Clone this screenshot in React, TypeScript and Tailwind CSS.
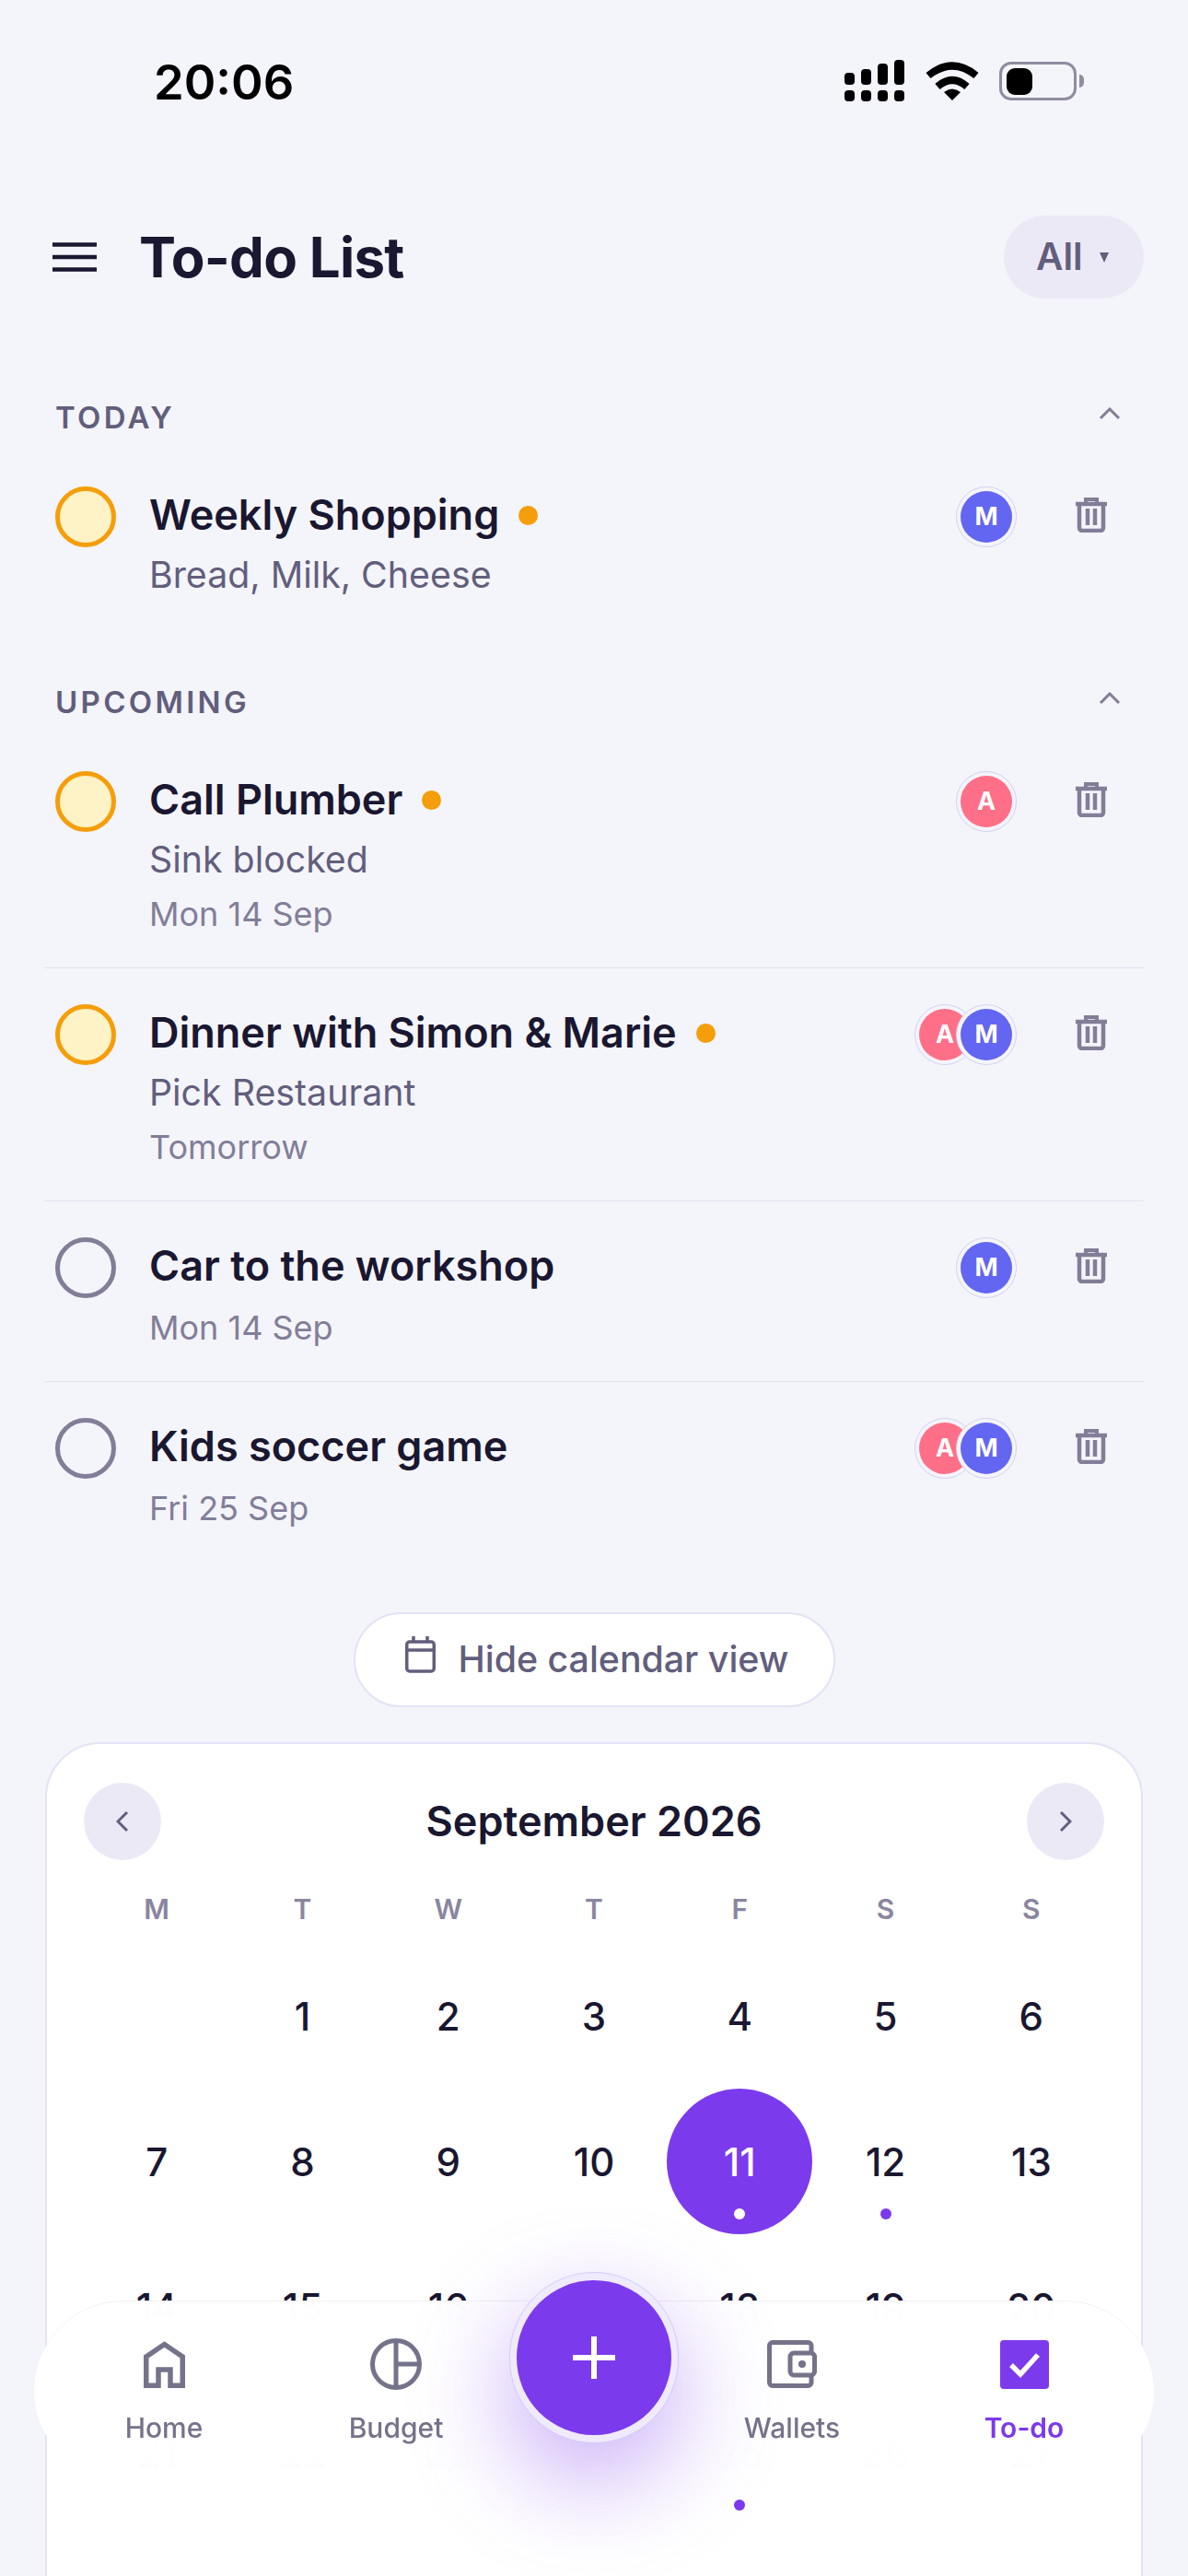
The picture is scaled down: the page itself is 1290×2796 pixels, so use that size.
const days: (number | null)[] = [
  null, 1, 2, 3, 4, 5, 6,
  7, 8, 9, 10, 11, 12, 13,
  14, 15, 16, 17, 18, 19, 20,
  21, 22, 23, 24, 25, 26, 27,
  28, 29, 30,
];
const dotted = [11, 12, 14, 25];
const weekdays = ["M", "T", "W", "T", "F", "S", "S"];

const Avatar = ({ letter, color }: { letter: string; color: string }) => (
  <div className="relative flex h-[66px] w-[66px] items-center justify-center rounded-full border border-[#d4d1f2] bg-[#f4f4fb]">
    <div className={`flex h-[56px] w-[56px] items-center justify-center rounded-full text-[27px] font-bold text-white ${color}`}>
      {letter}
    </div>
  </div>
);

const Trash = () => (
  <svg width="34" height="38" viewBox="0 0 34 38" fill="none" stroke="#827e98">
    <path d="M0 7H34" strokeWidth="4.5" />
    <path d="M11 5V2H23V5" strokeWidth="4" />
    <path d="M4 8V33a3 3 0 0 0 3 3H27a3 3 0 0 0 3-3V8" strokeWidth="4.5" />
    <path d="M13 12V30M21 12V30" strokeWidth="4.5" />
  </svg>
);

const Chevron = () => (
  <svg width="24" height="14" viewBox="0 0 24 14" fill="none" stroke="#827e98" strokeWidth="3" className="mb-[11px]">
    <path d="M2 12L12 2L22 12" />
  </svg>
);

type Task = {
  title: string;
  sub?: string;
  date?: string;
  flagged?: boolean;
  people: string[];
};

const Row = ({ task, last }: { task: Task; last?: boolean }) => (
  <div className={`flex pl-[12px] pr-[40px] pt-[39px] pb-[35px] ${last ? "" : "border-b border-[#e4e2f3]"}`}>
    <div
      className={`h-[66px] w-[66px] shrink-0 rounded-full border-[5px] ${
        task.flagged ? "border-[#f59e0b] bg-[#fef3c7]" : "border-[#827e98]"
      }`}
    />
    <div className="ml-[36px] flex-1">
      <div className="flex h-[62px] items-center">
        <span className="text-[45px] font-semibold text-[#1a1730]">{task.title}</span>
        {task.flagged && <span className="ml-[21px] h-[21px] w-[21px] rounded-full bg-[#f59e0b]" />}
      </div>
      {task.sub && <div className="mt-[8px] h-[52px] text-[39.3px] leading-[52px] text-[#625e7c]">{task.sub}</div>}
      {task.date && (
        <div className={`${task.sub ? "mt-[10px]" : "mt-[13px]"} h-[46px] text-[36px] leading-[46px] text-[#827e98]`}>
          {task.date}
        </div>
      )}
    </div>
    <div className="flex h-[66px] items-center">
      <div className="flex">
        {task.people.map((p, i) => (
          <div key={i} className={i > 0 ? "-ml-[21px]" : ""}>
            <Avatar letter={p} color={p === "A" ? "bg-[#ff6f87]" : "bg-[#6366f1]"} />
          </div>
        ))}
      </div>
      <div className="mb-[4px] ml-[64px]">
        <Trash />
      </div>
    </div>
  </div>
);

const SectionLabel = ({ text }: { text: string }) => (
  <div className="flex h-[40px] items-center justify-between pl-[12px] pr-[25px]">
    <span className="text-[33px] font-semibold tracking-[0.1em] text-[#625e7c]">{text}</span>
    <Chevron />
  </div>
);

const StatusIcons = () => (
  <div className="flex items-center">
    <svg width="66" height="46" viewBox="0 0 66 46" fill="#000">
      <rect x="0" y="14" width="11" height="13" rx="4" />
      <rect x="18" y="10" width="11" height="17" rx="4" />
      <rect x="36" y="4" width="11" height="23" rx="4" />
      <rect x="54" y="0" width="11" height="27" rx="4" />
      <rect x="0" y="33" width="11" height="12" rx="4" />
      <rect x="18" y="33" width="11" height="12" rx="4" />
      <rect x="36" y="33" width="11" height="12" rx="4" />
      <rect x="54" y="33" width="11" height="12" rx="4" />
    </svg>
    <svg width="58" height="42" viewBox="0 0 58 42" className="ml-[22px]" fill="none" stroke="#000" strokeWidth="8">
      <path d="M3 15Q29 -6 55 15" />
      <path d="M13 27Q29 13 45 27" />
      <path d="M20 33Q29 26 38 33L29 42Z" fill="#000" stroke="none" />
    </svg>
    <div className="ml-[22px] flex items-center">
      <div className="flex h-[42px] w-[84px] items-center rounded-[13px] border-[3px] border-[#8f8ca0] pl-[5px]">
        <div className="h-[29px] w-[28px] rounded-[9px] bg-black" />
      </div>
      <div className="ml-[3px] h-[14px] w-[5px] rounded-r-full bg-[#8f8ca0]" />
    </div>
  </div>
);

const NavItem = ({ label, active, children }: { label: string; active?: boolean; children: React.ReactNode }) => (
  <div className="flex flex-col items-center">
    <div className="flex h-[60px] items-center">{children}</div>
    <span className={`mt-[19px] text-[30px] leading-[40px] ${active ? "font-semibold text-[#7c3aed]" : "font-medium text-[#75738a]"}`}>
      {label}
    </span>
  </div>
);

export default function App() {
  return (
    <div className="relative h-[2796px] w-[1290px] overflow-hidden bg-[#f4f4fb] font-['Inter',sans-serif]">
      <div className="flex h-[176px] items-center justify-between pl-[167px] pr-[113px]">
        <span className="mt-[2px] text-[52.5px] font-semibold text-black">20:06</span>
        <StatusIcons />
      </div>

      <div className="flex h-[206px] items-center pl-[57px] pr-[48px]">
        <svg width="48" height="32" viewBox="0 0 48 32" stroke="#1a1730" strokeWidth="4.5">
          <path d="M0 2.5H48M0 16H48M0 29.5H48" />
        </svg>
        <h1 className="ml-[46px] flex-1 text-[60px] font-bold tracking-[-0.012em] text-[#1a1730]">To-do List</h1>
        <div className="flex h-[90px] w-[152px] items-center rounded-full bg-[#ece9f7] pl-[35px]">
          <span className="text-[40.5px] font-semibold text-[#625e7c]">All</span>
          <svg width="10" height="11" viewBox="0 0 10 11" fill="#625e7c" className="ml-[18px]">
            <path d="M0 0H10L5 11Z" />
          </svg>
        </div>
      </div>

      <div className="mx-[48px] mt-[52px]">
        <SectionLabel text="TODAY" />
        <div className="mt-[15px]">
          <Row task={{ title: "Weekly Shopping", sub: "Bread, Milk, Cheese", flagged: true, people: ["M"] }} last />
        </div>
        <div className="mt-[58px]">
          <SectionLabel text="UPCOMING" />
        </div>
        <div className="mt-[15px]">
          <Row task={{ title: "Call Plumber", sub: "Sink blocked", date: "Mon 14 Sep", flagged: true, people: ["A"] }} />
          <Row task={{ title: "Dinner with Simon & Marie", sub: "Pick Restaurant", date: "Tomorrow", flagged: true, people: ["A", "M"] }} />
          <Row task={{ title: "Car to the workshop", date: "Mon 14 Sep", people: ["M"] }} />
          <Row task={{ title: "Kids soccer game", date: "Fri 25 Sep", people: ["A", "M"] }} last />
        </div>
      </div>

      <div className="mt-[55px] flex justify-center">
        <div className="flex h-[103px] w-[523px] items-center rounded-full border-2 border-[#e4e2f5] bg-white pl-[54px]">
          <svg width="33" height="40" viewBox="0 0 33 40" fill="none" stroke="#625e7c" strokeWidth="3.5" className="mb-[12px]">
            <rect x="1.75" y="6" width="29.5" height="32" rx="3" />
            <path d="M1.75 15H31.25" />
            <path d="M9 0V7M24 0V7" />
          </svg>
          <span className="ml-[25px] text-[39.3px] font-medium text-[#625e7c]">Hide calendar view</span>
        </div>
      </div>

      <div className="mx-[49px] mt-[38px] rounded-[60px] border-2 border-[#e4e2f5] bg-white px-[40px] pt-[42px] pb-[40px]">
        <div className="flex items-center justify-between">
          <div className="flex h-[84px] w-[84px] items-center justify-center rounded-full bg-[#ece9f7]">
            <svg width="14" height="24" viewBox="0 0 14 24" fill="none" stroke="#625e7c" strokeWidth="3">
              <path d="M12 2L2 12L12 22" />
            </svg>
          </div>
          <span className="text-[45px] font-semibold text-[#1a1730]">September 2026</span>
          <div className="flex h-[84px] w-[84px] items-center justify-center rounded-full bg-[#ece9f7]">
            <svg width="14" height="24" viewBox="0 0 14 24" fill="none" stroke="#625e7c" strokeWidth="3">
              <path d="M2 2L12 12L2 22" />
            </svg>
          </div>
        </div>
        <div className="mt-[33px] grid grid-cols-7">
          {weekdays.map((d, i) => (
            <div key={i} className="text-center text-[30px] font-semibold leading-[40px] text-[#8a85a0]">
              {d}
            </div>
          ))}
        </div>
        <div className="mt-[17px] grid grid-cols-7">
          {days.map((d, i) => (
            <div key={i} className="flex h-[158px] items-center justify-center">
              {d && (
                <div
                  className={`relative flex h-[158px] w-[158px] items-center justify-center rounded-full text-[42px] font-medium ${
                    d === 11 ? "bg-[#7c3aed] text-white" : "text-[#1a1730]"
                  }`}
                >
                  {d}
                  {dotted.includes(d) && (
                    <span className={`absolute bottom-[16px] h-[12px] w-[12px] rounded-full ${d === 11 ? "bg-white" : "bg-[#7c3aed]"}`} />
                  )}
                </div>
              )}
            </div>
          ))}
        </div>
      </div>

      {/* bottom nav floats over the calendar */}
      <div className="absolute left-[37px] top-[2497px] grid h-[195px] w-[1216px] grid-cols-[252px_252px_178px_252px_252px] rounded-full border-t border-[#e9e7f4]/60 bg-white/[0.98] px-[15px] pt-[38px] backdrop-blur-[40px]">
        <NavItem label="Home">
          <svg width="45" height="51" viewBox="0 0 45 51" fill="none" stroke="#75738a" strokeWidth="5.5">
            <path d="M2.75 48.25V17L22.5 3.5L42.25 17V48.25H29V31H16V48.25Z" />
          </svg>
        </NavItem>
        <NavItem label="Budget">
          <svg width="56" height="56" viewBox="0 0 56 56" fill="none" stroke="#75738a" strokeWidth="5">
            <circle cx="28" cy="28" r="25.5" />
            <path d="M28 3V53M28 28H53" />
          </svg>
        </NavItem>
        <div />
        <NavItem label="Wallets">
          <svg width="54" height="52" viewBox="0 0 54 52" fill="none" stroke="#75738a" strokeWidth="5">
            <path d="M48 14V6a3.5 3.5 0 0 0-3.5-3.5H6A3.5 3.5 0 0 0 2.5 6V46A3.5 3.5 0 0 0 6 49.5H44.5A3.5 3.5 0 0 0 48 46V38" />
            <rect x="25" y="14" width="26.5" height="24" rx="4" />
            <circle cx="38" cy="26" r="4" fill="#75738a" stroke="none" />
          </svg>
        </NavItem>
        <NavItem label="To-do" active>
          <svg width="53" height="53" viewBox="0 0 53 53">
            <rect width="53" height="53" rx="4" fill="#7c3aed" />
            <path d="M12 27L22 37L41 16" fill="none" stroke="#fff" strokeWidth="5.5" />
          </svg>
        </NavItem>
      </div>

      <div className="absolute left-[553px] top-[2466px] flex h-[186px] w-[184px] items-center justify-center rounded-full border border-[#d5cbfb] bg-[#efeafc] shadow-[0_40px_110px_rgba(124,58,237,0.42)]">
        <div className="flex h-[168px] w-[168px] items-center justify-center rounded-full bg-[#7c3aed]">
          <svg width="46" height="46" viewBox="0 0 46 46" stroke="#fff" strokeWidth="6">
            <path d="M23 0V46M0 23H46" />
          </svg>
        </div>
      </div>
    </div>
  );
}
